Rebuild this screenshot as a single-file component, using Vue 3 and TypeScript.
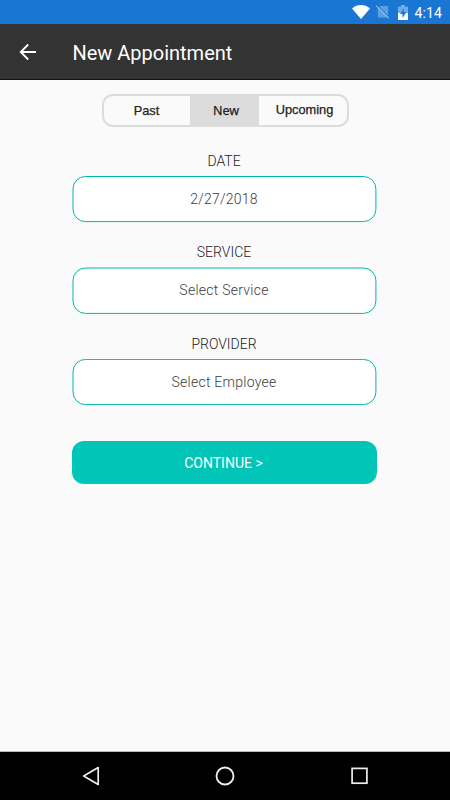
<script setup lang="ts">
import { ref } from 'vue'

interface Field {
  label: string
  value: string
  y: number
  height: number
}

const tabs = ['Past', 'New', 'Upcoming']
const activeTab = ref('New')

const fields: Field[] = [
  { label: 'DATE', value: '2/27/2018', y: 0.5, height: 45.1 },
  { label: 'SERVICE', value: 'Select Service', y: 1, height: 45.4 },
  { label: 'PROVIDER', value: 'Select Employee', y: 0.4, height: 45.2 },
]
</script>

<template>
  <div class="screen">
    <div class="status">
      <svg class="wifi" width="18" height="14" viewBox="0 0 18 14">
        <path d="M0 3.4C5-1.1 13-1.1 18 3.4L9 14Z" fill="#fff" />
      </svg>
      <svg class="sim" width="14" height="14" viewBox="0 0 14 14">
        <path d="M4.2 1H12.2V12.4H1.8V3.6Z" fill="#5e9fe2" />
        <path d="M1 -0.2L13.7 12.5" stroke="#1976d2" stroke-width="1" />
        <path d="M0.3 0.8L12.8 13.3" stroke="#8dbbea" stroke-width="1.1" />
      </svg>
      <svg class="battery" width="10" height="15" viewBox="0 0 10 15">
        <path d="M3 0H7V1.7H10V15H0V1.7H3Z" fill="#73abe5" />
        <path d="M0 8H10V15H0Z" fill="#fff" />
        <path d="M6 3.3L2 9H4.5V13L8.3 7.3H6Z" fill="#1976d2" />
      </svg>
      <span class="time">4:14</span>
    </div>

    <header class="appbar">
      <svg class="back" width="18" height="18" viewBox="0 0 18 18" fill="none" stroke="#fff" stroke-width="1.8">
        <path d="M17 9H2M9.2 1.5L1.7 9L9.2 16.5" />
      </svg>
      <h1>New Appointment</h1>
    </header>

    <main>
      <nav class="tabs">
        <button
          v-for="tab in tabs"
          :key="tab"
          :class="['tab', tab.toLowerCase(), { active: tab === activeTab }]"
          @click="activeTab = tab"
        ><span>{{ tab }}</span></button>
      </nav>

      <section v-for="field in fields" :key="field.label" class="group">
        <label>{{ field.label }}</label>
        <div class="field">
          <svg class="outline" width="306" height="47" viewBox="0 0 306 47">
            <rect x="1" :y="field.y" width="302.9" :height="field.height" rx="12.5" fill="#fff" stroke="#00b8a9" />
          </svg>
          <span>{{ field.value }}</span>
        </div>
      </section>

      <button class="continue"><span>CONTINUE &gt;</span></button>
    </main>

    <footer class="navbar">
      <svg width="18" height="20" viewBox="0 0 18 20" fill="none" stroke="#eee" stroke-width="1.7" stroke-linejoin="round">
        <path d="M16.2 1.6V18.4L1.7 10Z" />
      </svg>
      <svg width="20" height="20" viewBox="0 0 20 20" fill="none" stroke="#eee" stroke-width="1.8">
        <circle cx="10" cy="10" r="8.5" />
      </svg>
      <svg width="18" height="18" viewBox="0 0 18 18" fill="none" stroke="#eee" stroke-width="1.7">
        <rect x="2.1" y="1.4" width="14.8" height="14.8" />
      </svg>
    </footer>
  </div>
</template>

<style>
body {
  margin: 0;
}
</style>

<style scoped>
.screen {
  width: 450px;
  height: 800px;
  display: flex;
  flex-direction: column;
  overflow: hidden;
  background: #fafafa;
  font-family: Roboto, sans-serif;
}
button {
  margin: 0;
  padding: 0;
  border: 0;
  font: inherit;
}
.status {
  height: 24px;
  box-sizing: border-box;
  padding-right: 8px;
  display: flex;
  align-items: flex-start;
  justify-content: flex-end;
  background: #1976d2;
  color: #fff;
}
.wifi {
  margin: 5px 6px 0 0;
}
.sim {
  margin: 5px 8px 0 0;
}
.battery {
  margin: 5px 7px 0 0;
}
.time {
  font-size: 14px;
  line-height: 26px;
  letter-spacing: 0.1px;
}
.appbar {
  height: 56px;
  box-sizing: border-box;
  padding-left: 19px;
  display: flex;
  align-items: center;
  background: #333;
  border-bottom: 1px solid #111;
  color: #fff;
}
.back {
  margin-right: 35.4px;
}
h1 {
  margin: 3px 0 0;
  font-size: 20px;
  line-height: 26px;
  font-weight: 400;
  white-space: nowrap;
}
main {
  flex: 1;
  display: flex;
  flex-direction: column;
  align-items: center;
}
.tabs {
  width: 247px;
  height: 33px;
  box-sizing: border-box;
  margin: 14px 0 26px 1px;
  display: grid;
  grid-template-columns: 86px 69px 1fr;
  border: 2px solid #dcdcdc;
  border-radius: 11px;
  overflow: hidden;
}
.tab {
  background: transparent;
  color: #222;
  font-family: "Liberation Sans", sans-serif;
  font-size: 12.8px;
  line-height: 29px;
  -webkit-text-stroke: 0.25px #222;
}
.tab.past {
  padding-right: 1px;
}
.tab.active {
  background: #dcdcdc;
}
.tab.new {
  padding-left: 3px;
  font-family: "Noto Sans", sans-serif;
  font-size: 12.5px;
}
.tab.upcoming {
  padding: 0 0 1px 3px;
  line-height: 28px;
}
.group {
  width: 306px;
  height: 91.3px;
  flex: none;
  text-align: center;
}
label {
  display: block;
  height: 23px;
  margin-right: 2px;
  font-size: 14px;
  font-weight: 300;
  line-height: 16px;
  color: #222;
}
.field {
  position: relative;
  height: 46px;
  line-height: 47px;
  font-size: 14px;
  font-weight: 300;
  letter-spacing: 0.25px;
  color: #3c3c3c;
}
.outline {
  position: absolute;
  left: 0;
  top: 0;
}
.field span {
  position: relative;
  margin-right: 2px;
}
.continue {
  width: 305px;
  height: 43px;
  margin: 14.6px 0 0 -1px;
  padding-right: 2px;
  box-sizing: border-box;
  border-radius: 12px;
  background: #00c5b7;
  color: #fff;
  font-size: 14px;
}
.navbar {
  height: 49px;
  box-sizing: border-box;
  padding: 0 82px 0 82px;
  display: flex;
  align-items: center;
  justify-content: space-between;
  background: #000;
  border-top: 1px solid #bbb;
}
</style>
